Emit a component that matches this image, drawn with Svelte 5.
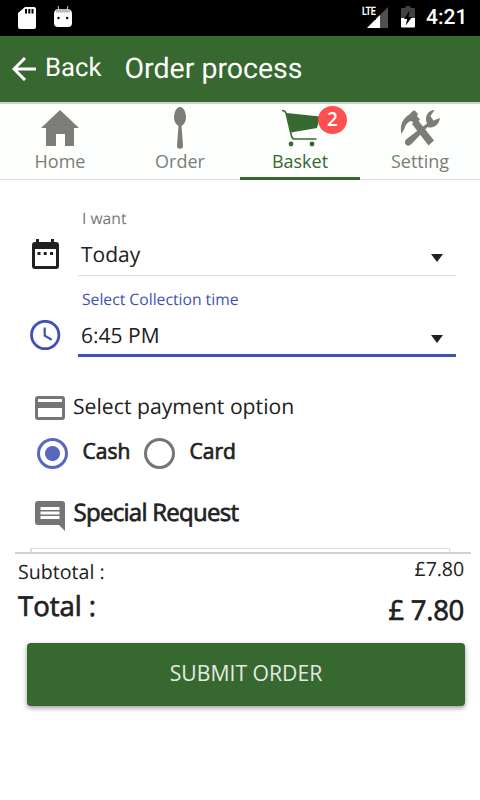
<script>
  const tabs = [
    { name: 'Home', icon: 'home' },
    { name: 'Order', icon: 'spoon' },
    { name: 'Basket', icon: 'cart', badge: 2 },
    { name: 'Setting', icon: 'tools' }
  ];
  let active = $state('Basket');
  let payment = $state('Cash');
</script>

<div class="screen">
  <div class="status">
    <svg class="sd" width="18" height="22" viewBox="0 0 18 22"><path fill="#fff" d="M7 0h9q2 0 2 2v18q0 2-2 2H2q-2 0-2-2V6z"/><path d="M7 2h2v4.500H7zM10.300 2h2v4.500h-2zM13.500 2h2v4.500h-2z"/></svg>
    <svg class="droid" width="18" height="22" viewBox="0 0 18 22"><path fill="none" stroke="#ccc" stroke-width="1" d="M4 0l1 4M14 0l-1 4"/><path fill="#fff" d="M0 8q0-5 5-5h8q5 0 5 5v9q0 4-4 4H4q-4 0-4-4z"/><path fill="#bbb" d="M2 4q2-1 4-1h6q2 0 4 1v2.500H2z"/><circle cx="4.500" cy="12" r="1.200"/><circle cx="13.200" cy="12" r="1.200"/></svg>
    <span class="space"></span>
    <div class="signal">
      <svg width="21" height="21" viewBox="0 0 21 21"><path fill="#505050" d="M21 0v21H0z"/><path fill="#fff" d="M13 8v13H0z"/></svg>
      <span class="lte">LTE</span>
    </div>
    <svg class="battery" width="14" height="22" viewBox="0 0 14 22"><path fill="#424242" d="M4.500 0h5v2H13q1 0 1 1v9H0V3q0-1 1-1h3.500z"/><path fill="#fff" d="M0 12h14v8q0 1.500-1 1.500H1Q0 21.500 0 20z"/><path d="M8.500 4.500L3 13h3.200l-1.500 6.500L11 11H7.500z"/></svg>
    <span class="clock">4:21</span>
  </div>

  <header>
    <svg width="24" height="24" viewBox="0 0 24 24"><path fill="none" stroke="#fff" stroke-width="3" d="M24 12H2.500M13 1L2 12l11 11"/></svg>
    <span class="back">Back</span>
    <span class="title">Order process</span>
  </header>

  <nav>
    {#each tabs as tab}
      <button class="tab" class:active={active === tab.name} onclick={() => (active = tab.name)}>
        {#if tab.icon === 'home'}
          <svg width="44" height="44" viewBox="0 0 44 44"><path d="M22 4L41 22h-5v18h-9V28h-9v12H8V22H3z"/></svg>
        {:else if tab.icon === 'spoon'}
          <svg width="44" height="44" viewBox="0 0 44 44"><path d="M22 1c4 0 6 6 6 10.500 0 4-2 7-4.500 8.500L25 39.500q.2 3.300-3 3.300t-3-3.300L20.500 20C18 18.500 16 15.500 16 11.500 16 7 18 1 22 1z"/></svg>
        {:else if tab.icon === 'cart'}
          <svg width="44" height="44" viewBox="0 0 44 44"><path d="M8.500 7L42 10.500l-3 11.500-26 4.500z"/><path fill="none" stroke="currentColor" stroke-width="1.600" d="M4 4.500q3 0 4 2.500l5 21q1 5 3 5h22.500"/><circle cx="13" cy="38" r="2.400"/><circle cx="34" cy="38" r="2.400"/></svg>
          <span class="badge">{tab.badge}</span>
        {:else}
          <svg width="44" height="44" viewBox="0 0 44 44"><path d="M12 8q2-3.300 4.500-3.800L20 8l-1 2 3 3.500-5 5-3.500-3.500c-3.500 0-6 4-7 7.500L3.500 28C1.500 20 4.500 12 12 8z"/><path d="M14 18l5-5 17 21.500-5.500 5z"/><path d="M29 17.500C26 11 30 4 36.500 4l-4 6 3 4.500 6.500-2.500c-1 7-7 11-12.500 9L13.500 38q-3 3-5.500.7t.3-5.400z"/></svg>
        {/if}
        <span class="label">{tab.name}</span>
      </button>
    {/each}
  </nav>

  <main>
    <section class="field day">
      <svg class="lead" width="32" height="32" viewBox="0 0 32 32"><path fill="#212121" fill-rule="evenodd" d="M6 0h3v3h12V0h3v3h2q3 0 3 3v21q0 3-3 3H5q-3 0-3-3V6q0-3 3-3h1zM5 10v17h21V10z"/><path fill="#212121" d="M7.500 13h3v3h-3zM13.700 13h3v3h-3zM20 13h3v3h-3z"/></svg>
      <div class="control">
        <label for="day">I want</label>
        <div id="day" class="value"><span>Today</span><i></i></div>
      </div>
    </section>
    <section class="field time">
      <svg class="lead" width="32" height="32" viewBox="0 0 32 32"><circle cx="15.200" cy="15" r="13.700" fill="none" stroke="#3f51b5" stroke-width="2.800"/><path fill="none" stroke="#3f51b5" stroke-width="2.200" d="M14.700 7.500v8.200l7 4.100"/></svg>
      <div class="control">
        <label for="time">Select Collection time</label>
        <div id="time" class="value"><span>6:45 PM</span><i></i></div>
      </div>
    </section>

    <div class="heading pay">
      <svg width="30" height="24" viewBox="0 0 30 24"><path fill="#757575" fill-rule="evenodd" d="M3 0h24q3 0 3 3v18q0 3-3 3H3q-3 0-3-3V3q0-3 3-3zM3 3v3h24V3zM3 12v9h24v-9z"/></svg>
      <span>Select payment option</span>
    </div>
    <div class="options">
      {#each ['Cash', 'Card'] as option}
        <button class="option" class:on={payment === option} onclick={() => (payment = option)}>
          <span class="ring"></span><span class="strong">{option}</span>
        </button>
      {/each}
    </div>
    <div class="heading request">
      <svg width="30" height="30" viewBox="0 0 30 30"><path fill="#757575" fill-rule="evenodd" d="M3 0h24q3 0 3 3v27l-6-6H3q-3 0-3-3V3q0-3 3-3zM5.500 6v3h19V6zM5.500 10.500v3h19v-3zM5.500 15v3h19v-3z"/></svg>
      <span class="strong">Special Request</span>
    </div>
    <div class="note"></div>
  </main>

  <footer>
    <div class="row sub"><span>Subtotal :</span><span class="amount">£7.80</span></div>
    <div class="row total"><span>Total :</span><span class="amount">£ 7.80</span></div>
    <button class="submit"><span>SUBMIT ORDER</span></button>
  </footer>
</div>

<style>
  .screen { box-sizing: border-box; width: 480px; height: 800px; overflow: hidden; display: flex; flex-direction: column; background: #fff; color: #212121; font-family: "Open Sans", "Noto Sans", sans-serif; font-weight: 390; text-rendering: geometricPrecision; white-space: nowrap; }
  .screen * { box-sizing: border-box; }
  svg { display: block; flex: none; }
  button { border: 0; margin: 0; padding: 0; background: none; font: inherit; color: inherit; }

  .status { flex: none; height: 36px; display: flex; align-items: flex-start; background: #000; padding: 0 12px 0 18px; }
  .sd { margin-top: 7px; }
  .droid { margin: 6px 0 0 18px; }
  .space { flex: 1; }
  .signal { position: relative; margin: 7px 13px 0 0; }
  .lte { position: absolute; left: -7px; top: -1px; height: 12px; padding: 0 1px 0 2px; background: #000; color: #fff; font: bold 9px/13px Roboto, sans-serif; transform: scaleY(1.3); transform-origin: 0 50%; letter-spacing: -.4px; }
  .battery { margin: 6px 11px 0 0; }
  .clock { width: 42px; color: #fff; font: 500 21px/37px Roboto, sans-serif; }

  header { flex: none; height: 66px; display: flex; align-items: flex-start; background: #366830; color: #fff; padding-left: 12px; font-family: Roboto, sans-serif; font-weight: 400; }
  header svg { margin-top: 21px; }
  .back { width: 79.500px; margin-left: 9px; font-size: 25.700px; line-height: 65px; }
  .title { font-size: 28.500px; line-height: 65px; }

  nav { flex: none; height: 78px; display: flex; border-top: 2px solid #cdd3cc; background: #fdfffc; }
  .tab { position: relative; width: 120px; display: flex; flex-direction: column; align-items: center; padding-top: 2px; color: #7c7c7a; border-bottom: 1px solid #dadcda; }
  .tab svg { fill: currentColor; }
  .tab.active { color: #366830; border-bottom: 3px solid #366830; }
  .label { font-size: 18px; line-height: 24px; margin-top: -1px; }
  .badge { position: absolute; left: 78px; top: 2px; width: 29px; height: 28px; border-radius: 50%; background: #ff4f4f; color: #fff; font-size: 19px; font-weight: 600; line-height: 26px; text-align: center; }

  main { flex: none; height: 372px; padding: 24px 24px 0 30px; display: flex; flex-direction: column; overflow: hidden; }
  .field { height: 81px; flex: none; display: flex; }
  .field .lead { margin-top: 35px; }
  .control { flex: 1; margin-left: 16px; display: flex; flex-direction: column; }
  label { height: 30px; padding-left: 4px; font-size: 15.700px; line-height: 29px; color: #777; }
  .value { height: 42px; display: flex; align-items: flex-start; justify-content: space-between; padding: 0 13px 0 3px; font-size: 21px; line-height: 42px; border-bottom: 1.500px solid #dedede; }
  .value i { margin-top: 20px; border: 6px solid transparent; border-top: 8px solid #212121; border-bottom: 0; }
  .time label { color: #3f51b5; }
  .time .value { height: 42px; border-bottom: 3px solid #3f51b5; }

  .heading { flex: none; display: flex; padding-left: 5px; }
  .pay { height: 48px; margin-top: 17px; font-size: 21.200px; line-height: 47px; }
  .pay svg { margin-top: 13px; }
  .pay span { margin-left: 8px; }
  .strong, .total { font-weight: 400; -webkit-text-stroke: .7px #212121; }
  .options { flex: none; height: 40px; padding-left: 7px; display: flex; gap: 13px; }
  .option { display: flex; width: 94px; font-size: 21px; line-height: 40px; }
  .option .strong { margin-left: 14.500px; }
  .ring { flex: none; width: 31px; height: 31px; margin-top: 7px; border: 3px solid #757575; border-radius: 50%; }
  .on .ring { border-color: #5868bd; background: radial-gradient(circle, #5868bd 7px, transparent 8px); }
  .request { height: 77px; font-size: 24px; line-height: 84px; letter-spacing: -.72px; }
  .request svg { margin-top: 30px; }
  .request span { margin-left: 8.500px; }
  .note { flex: none; width: 420px; height: 30px; margin-top: 0; border: 1px solid #ddd; border-left-width: 2px; }

  footer { flex: 1; margin: 0 9px 0 15px; border-top: 2px solid #d2d2d2; background: #fff; display: flex; flex-direction: column; }
  .row { flex: none; display: flex; justify-content: space-between; padding: 0 7px 0 3px; }
  .sub { height: 34px; font-size: 19.600px; line-height: 36px; }
  .sub .amount { line-height: 30px; letter-spacing: -.1px; }
  .total { height: 55px; font-size: 27.500px; line-height: 38px; }
  .total .amount { line-height: 46px; letter-spacing: -.3px; }
  .submit { width: 438px; height: 63px; margin: 0 0 0 12px; border-radius: 4px; background: #366830; color: #e3eae2; font-size: 21.200px; line-height: 60px; box-shadow: 0 2px 5px #0006; }
  .submit span { display: block; line-height: 60px; height: 63px; }
</style>
